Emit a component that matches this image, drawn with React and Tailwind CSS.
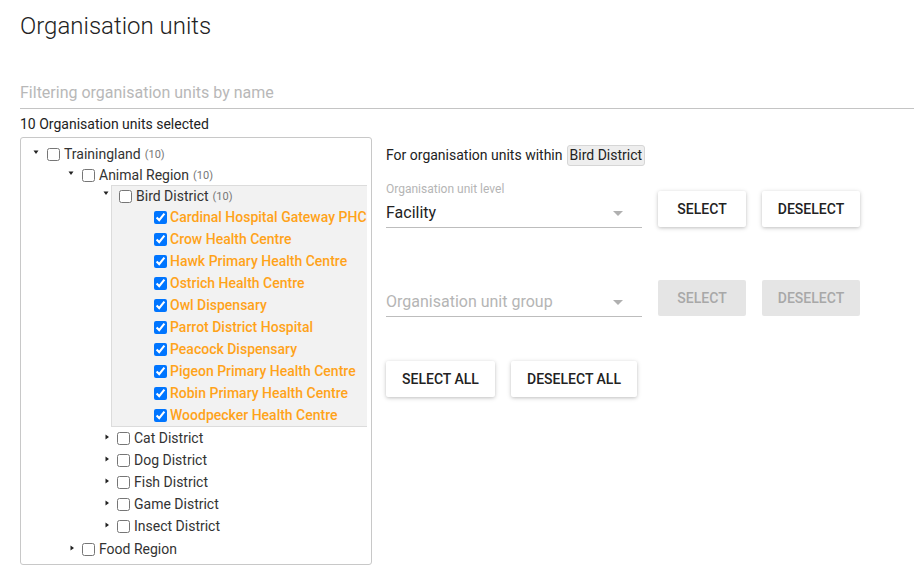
import React from 'react';

const birds = [
  'Cardinal Hospital Gateway PHC',
  'Crow Health Centre',
  'Hawk Primary Health Centre',
  'Ostrich Health Centre',
  'Owl Dispensary',
  'Parrot District Hospital',
  'Peacock Dispensary',
  'Pigeon Primary Health Centre',
  'Robin Primary Health Centre',
  'Woodpecker Health Centre',
];

const districts = ['Cat District', 'Dog District', 'Fish District', 'Game District', 'Insect District'];

// small tree toggles
function Arrow({ open }) {
  return (
    <span className="w-[10px] h-[21px] flex justify-center shrink-0">
      {open ? (
        <svg width="6" height="6" viewBox="0 0 6 6" className="mt-[5px]">
          <path d="M0.5 1.5 L5.5 1.5 L3 5 Z" fill="#222" />
        </svg>
      ) : (
        <svg width="6" height="6" viewBox="0 0 6 6" className="mt-[6px] ml-[2px]">
          <path d="M1.5 0.5 L5 3 L1.5 5.5 Z" fill="#222" />
        </svg>
      )}
    </span>
  );
}

function Box({ checked }) {
  return <input type="checkbox" checked={checked} readOnly className="m-0 w-[13px] h-[13px] shrink-0" />;
}

function Node({ pl, open, label, count, className = 'h-[21px]' }) {
  return (
    <div className={`flex items-start ${className}`} style={{ paddingLeft: pl }}>
      <Arrow open={open} />
      <div className="flex items-center h-[21px] ml-[6px]">
        <Box />
        <span className="ml-[4px] text-[14px] text-[#333]">{label}</span>
        {count && <span className="ml-[4px] text-[11px] text-[#777] mt-[2px]">({count})</span>}
      </div>
    </div>
  );
}

function Button({ children, w, disabled }) {
  return (
    <button
      className={`h-[36px] rounded-[2px] text-[14px] font-medium uppercase ${w} ${
        disabled
          ? 'bg-[#e5e5e5] text-[#a8a8a8]'
          : 'bg-white text-[#222] shadow-[0_1px_5px_rgba(0,0,0,0.15),0_1px_3px_rgba(0,0,0,0.12)]'
      }`}
    >
      {children}
    </button>
  );
}

function Field({ label, value, placeholder }) {
  return (
    <div className="w-[256px] border-b border-[#bdbdbd]">
      <div className="h-[17px] pt-[1px] text-[12px] leading-[16px] text-[#b5b5b5]">{label}</div>
      <div className="h-[30px] flex items-center justify-between pt-[2px]">
        <span className={`text-[16px] ${value ? 'text-[#222]' : 'text-[#b5b5b5]'}`}>{value || placeholder}</span>
        <svg width="10" height="5" viewBox="0 0 10 5" className="mr-[19px]">
          <path d="M0 0 L10 0 L5 5 Z" fill="#b0b0b0" />
        </svg>
      </div>
    </div>
  );
}

export default function App() {
  return (
    <div className="pl-5 bg-white min-h-[582px] pt-[1px] font-['Roboto',sans-serif] text-[#222]">
      <h1 className="h-[32px] mt-[9px] text-[24px] leading-[32px] font-light text-[#222]">Organisation units</h1>

      <div className="mt-[35px] h-[32px] flex items-center border-b border-[#c4c4c4]">
        <span className="text-[16px] text-[#b8b8b8]">Filtering organisation units by name</span>
      </div>

      <div className="mt-[5px] h-[20px] text-[14px] leading-[20px] text-[#222]">10 Organisation units selected</div>

      <div className="mt-[3px] flex items-start">
        {/* tree */}
        <div className="w-[352px] h-[428px] border border-[#c8c8c8] rounded-[3px] pt-[6px] pr-[4px] overflow-hidden">
          <Node pl={10} open label="Trainingland" count="10" />
          <Node pl={45} open label="Animal Region" count="10" className="h-[20px]" />
          <div className="flex items-start" style={{ paddingLeft: 80 }}>
            <Arrow open />
            <div className="flex-1 bg-[#f2f2f2] border border-r-0 border-[#dcdcdc] min-w-0">
              <div className="flex items-center h-[20px] pl-[7px]">
                <Box />
                <span className="ml-[4px] text-[14px] text-[#333]">Bird District</span>
                <span className="ml-[4px] text-[11px] text-[#777] mt-[2px]">(10)</span>
              </div>
              {birds.map((b) => (
                <div key={b} className="flex items-center h-[22px] pl-[42px] whitespace-nowrap">
                  <Box checked />
                  <span className="ml-[3px] text-[14px] font-medium text-[#ffa31a]">{b}</span>
                </div>
              ))}
            </div>
          </div>
          <div className="mt-[1px]">
            {districts.map((d) => (
              <Node key={d} pl={80} label={d} className="h-[22px]" />
            ))}
          </div>
          <Node pl={45} label="Food Region" className="h-[22px] mt-[1px]" />
        </div>

        {/* right panel */}
        <div className="ml-[14px] flex flex-col">
          <div className="mt-[7px] h-[22px] flex items-center text-[14px] text-[#222]">
            <span>For organisation units within</span>
            <span className="ml-[4px] h-[21px] px-[2px] flex items-center bg-[#eeeeee] border border-[#d6d6d6] rounded-[3px]">
              Bird District
            </span>
          </div>

          <div className="mt-[14px] flex items-end gap-4">
            <Field label="Organisation unit level" value="Facility" />
            <div className="flex gap-4 mb-[1px]">
              <Button w="w-[88px]">Select</Button>
              <Button w="w-[98px]">Deselect</Button>
            </div>
          </div>

          <div className="mt-[41px] flex items-end gap-4">
            <Field label="" placeholder="Organisation unit group" />
            <div className="flex gap-4 mb-[1px]">
              <Button w="w-[88px]" disabled>Select</Button>
              <Button w="w-[98px]" disabled>Deselect</Button>
            </div>
          </div>

          <div className="mt-[44px] flex gap-4">
            <Button w="w-[109px]">Select all</Button>
            <Button w="w-[126px]">Deselect all</Button>
          </div>
        </div>
      </div>
    </div>
  );
}
